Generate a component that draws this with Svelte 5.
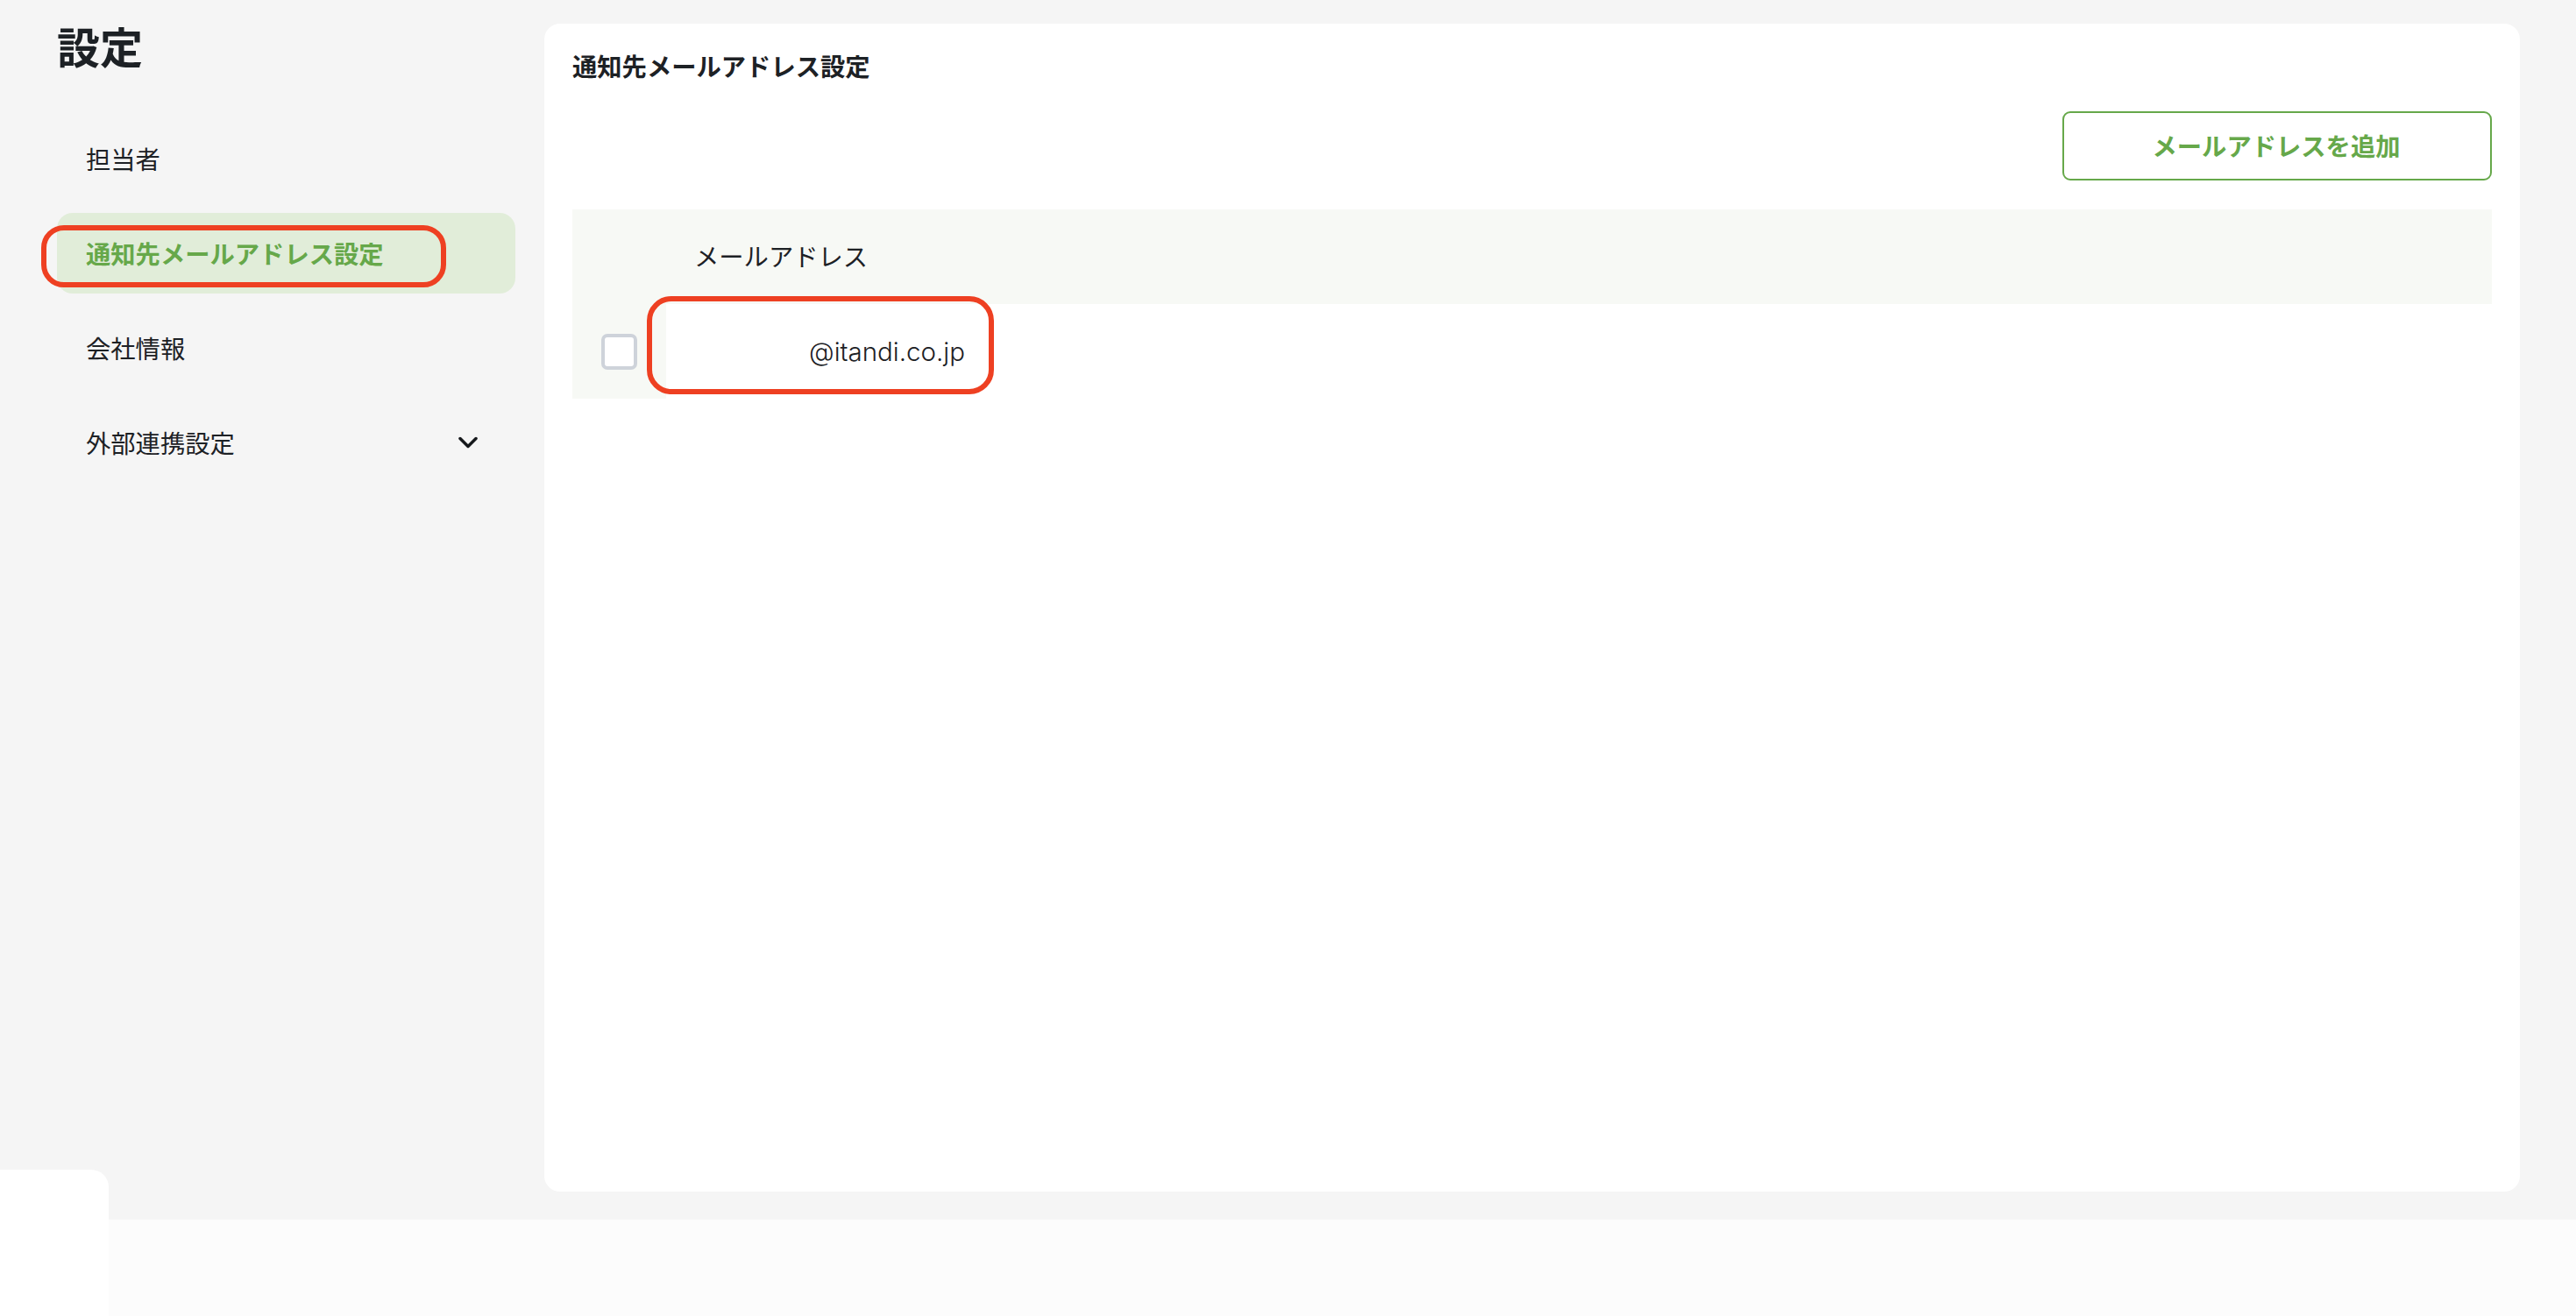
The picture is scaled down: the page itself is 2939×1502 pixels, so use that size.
<script>
  const navItems = [
    { label: '担当者' },
    { label: '通知先メールアドレス設定', active: true },
    { label: '会社情報' },
    { label: '外部連携設定', expandable: true }
  ];
  const emails = ['@itandi.co.jp'];
</script>

<div class="page">
  <div class="content">
    <aside class="sidebar">
      <h1 class="page-title">設定</h1>
      <nav class="nav">
        {#each navItems as item}
          <div class="nav-item" class:active={item.active}>
            <span>{item.label}</span>
            {#if item.expandable}
              <svg class="chevron" viewBox="0 0 22 14" width="22" height="14" fill="none">
                <path d="M2 2.5 L11 11.5 L20 2.5" stroke="#16191c" stroke-width="3.5" stroke-linecap="round" stroke-linejoin="round" />
              </svg>
            {/if}
            {#if item.active}
              <div class="callout nav-callout"></div>
            {/if}
          </div>
        {/each}
      </nav>
    </aside>

    <main class="card">
      <h2 class="card-title">通知先メールアドレス設定</h2>
      <div class="toolbar">
        <button class="add-button">メールアドレスを追加</button>
      </div>
      <div class="table">
        <div class="row head">
          <div class="check-cell"></div>
          <div class="head-cell">メールアドレス</div>
        </div>
        {#each emails as email}
          <div class="row">
            <div class="check-cell tinted">
              <span class="checkbox"></span>
            </div>
            <div class="email-cell">{email}</div>
            <div class="callout row-callout"></div>
          </div>
        {/each}
      </div>
    </main>
  </div>

  <footer class="footer"></footer>
  <div class="corner-mask"></div>
</div>

<style>
  :global(body) {
    margin: 0;
    background: #f5f5f5;
  }

  .page {
    position: relative;
    width: 2939px;
    height: 1502px;
    overflow: hidden;
    display: flex;
    flex-direction: column;
    background: #f5f5f5;
    color: #1d2125;
    font-family: "Noto Sans CJK JP", "Noto Sans", sans-serif;
  }

  .content {
    display: flex;
    height: 1392px;
    box-sizing: border-box;
    padding: 27px 64px 32px 65px;
    gap: 33px;
  }

  .sidebar {
    width: 523px;
    flex-shrink: 0;
  }

  .page-title {
    margin: -2px 0 0;
    height: 54px;
    line-height: 54px;
    font-size: 49px;
    font-weight: 700;
    letter-spacing: 0;
  }

  .nav {
    margin-top: 56px;
    display: flex;
    flex-direction: column;
    gap: 16px;
  }

  .nav-item {
    position: relative;
    height: 92px;
    display: flex;
    align-items: center;
    justify-content: space-between;
    padding: 0 43px 2px 33px;
    box-sizing: border-box;
    border-radius: 18px;
    font-size: 28.3px;
    font-weight: 400;
  }

  .nav-item.active {
    background: #e1edd9;
    color: #66a84a;
    font-weight: 700;
  }

  .chevron {
    display: block;
    margin-top: 2px;
  }

  .callout {
    position: absolute;
    box-sizing: border-box;
    border: 6px solid #ee4022;
    pointer-events: none;
  }

  .nav-callout {
    left: -18px;
    top: 14px;
    width: 462px;
    height: 71px;
    border-radius: 26px;
  }

  .card {
    flex: 1;
    background: #fff;
    border-radius: 18px;
    padding: 0 32px;
  }

  .card-title {
    margin: 0;
    padding-top: 26px;
    height: 50px;
    line-height: 44px;
    font-size: 28.3px;
    font-weight: 700;
  }

  .toolbar {
    display: flex;
    justify-content: flex-end;
    margin-top: 24px;
  }

  .add-button {
    width: 490px;
    height: 79px;
    padding: 0 2px 2px 0;
    background: #fff;
    border: 2.5px solid #66a84a;
    border-radius: 9px;
    color: #66a84a;
    font-family: inherit;
    font-size: 28.3px;
    font-weight: 700;
  }

  .table {
    margin-top: 33px;
  }

  .row {
    position: relative;
    display: flex;
    height: 108px;
    align-items: stretch;
  }

  .row.head {
    background: #f7f9f5;
  }

  .check-cell {
    width: 107px;
    flex-shrink: 0;
    display: flex;
    align-items: center;
    padding-left: 33px;
    box-sizing: border-box;
  }

  .check-cell.tinted {
    background: #f7f9f5;
  }

  .checkbox {
    display: block;
    box-sizing: border-box;
    width: 41px;
    height: 41px;
    background: #fff;
    border: 4px solid #ced3da;
    border-radius: 7px;
  }

  .head-cell {
    display: flex;
    align-items: center;
    padding: 0 0 4px 32px;
    font-size: 28.3px;
    font-weight: 400;
  }

  .email-cell {
    display: flex;
    align-items: center;
    padding: 0 0 1px 163px;
    font-family: Inter, "Noto Sans CJK JP", sans-serif;
    font-size: 29.5px;
    font-weight: 300;
  }

  .row-callout {
    left: 85px;
    top: -9px;
    width: 396px;
    height: 112px;
    border-radius: 28px;
  }

  .footer {
    height: 110px;
    background: #fcfcfc;
  }

  .corner-mask {
    position: absolute;
    left: 0;
    bottom: 0;
    width: 124px;
    height: 167px;
    background: #fff;
    border-top-right-radius: 20px;
  }
</style>
